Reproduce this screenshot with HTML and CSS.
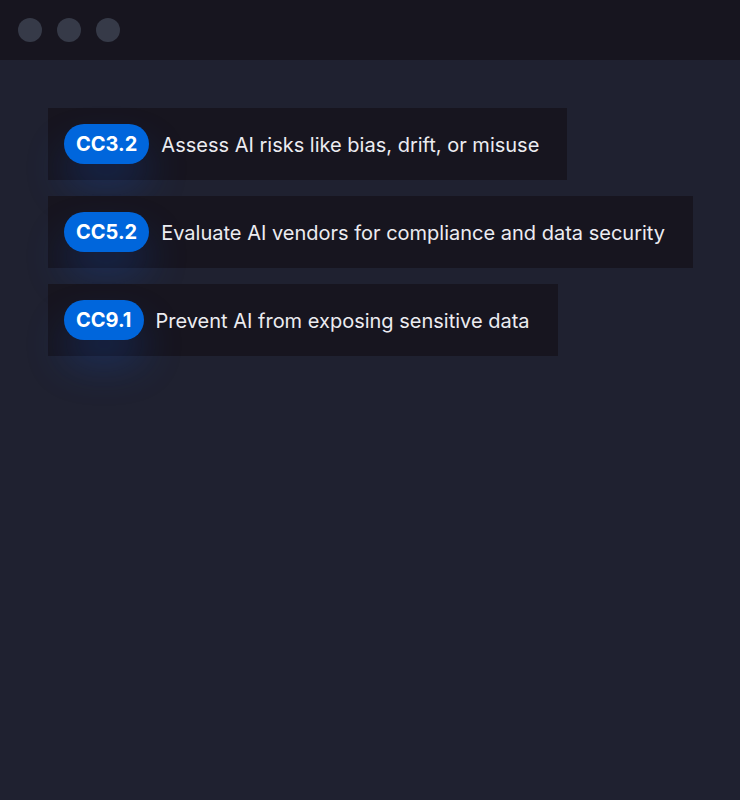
FILE: index.html
```html
<!DOCTYPE html>
<html>
<head>
<meta charset="utf-8">
<link rel="stylesheet" href="styles.css">
</head>
<body>
<div class="window">
  <div class="titlebar">
    <span class="dot"></span>
    <span class="dot"></span>
    <span class="dot"></span>
  </div>
  <div class="content">
    <div class="row"><span class="badge">CC3.2</span><span class="label">Assess AI risks like bias, drift, or misuse</span></div>
    <div class="row"><span class="badge">CC5.2</span><span class="label">Evaluate AI vendors for compliance and data security</span></div>
    <div class="row"><span class="badge">CC9.1</span><span class="label">Prevent AI from exposing sensitive data</span></div>
  </div>
</div>
</body>
</html>
```
FILE: styles.css
```css
html, body {
  margin: 0;
  padding: 0;
  background: #1f2130;
  font-family: Inter, "Noto Sans", sans-serif;
}
.window {
  width: 740px;
  height: 800px;
  background: #1f2130;
  overflow: hidden;
}
.titlebar {
  height: 60px;
  background: #17151f;
  display: flex;
  align-items: center;
  gap: 15px;
  padding-left: 18px;
  box-sizing: border-box;
}
.dot {
  width: 24px;
  height: 24px;
  border-radius: 50%;
  background: #363a48;
}
.content {
  padding: 48px 0 48px 48px;
  display: flex;
  flex-direction: column;
  align-items: flex-start;
  gap: 16px;
}
.row {
  height: 72px;
  box-sizing: border-box;
  background: #17151f;
  display: flex;
  align-items: center;
  gap: 12px;
  padding: 0 28px 0 16px;
  white-space: nowrap;
}
.badge {
  height: 40px;
  padding: 0 12px;
  border-radius: 20px;
  background: #0066dc;
  color: #ffffff;
  font-weight: 700;
  font-size: 20px;
  display: flex;
  align-items: center;
  flex-shrink: 0;
  box-shadow: 0 24px 40px rgba(20, 80, 190, 0.3);
}
.label {
  color: #ececf1;
  font-size: 20px;
  font-weight: 400;
  padding-top: 2px;
}
```
